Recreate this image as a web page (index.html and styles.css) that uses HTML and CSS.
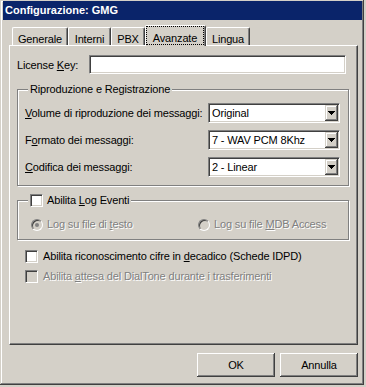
FILE: index.html
```html
<!DOCTYPE html>
<html lang="it">
<head>
<meta charset="utf-8">
<title>Configurazione: GMG</title>
<link rel="stylesheet" href="styles.css">
</head>
<body>
<div class="window">
  <div class="titlebar">Configurazione: GMG</div>
  <div class="content">
    <div class="tabs">
      <div class="tab w-generale"><span class="tab-label">Generale</span></div>
      <div class="tab w-interni"><span class="tab-label">Interni</span></div>
      <div class="tab w-pbx"><span class="tab-label">PBX</span></div>
      <div class="tab active w-avanzate"><span class="focus">Avanzate</span></div>
      <div class="tab w-lingua"><span class="tab-label">Lingua</span></div>
    </div>
    <div class="panel">
      <div class="key-row">
        <span class="key-label">License <u>K</u>ey:</span>
        <div class="edit"></div>
      </div>

      <fieldset class="group group-rip">
        <legend>Riproduzione e Registrazione</legend>
        <div class="field">
          <span><u>V</u>olume di riproduzione dei messaggi:</span>
          <div class="combo"><span class="combo-text">Original</span><span class="drop"><svg width="7" height="4" viewBox="0 0 7 4" shape-rendering="crispEdges"><path d="M0 0h7v1H0zM1 1h5v1H1zM2 2h3v1H2zM3 3h1v1H3z" fill="#000"/></svg></span></div>
        </div>
        <div class="field">
          <span>F<u>o</u>rmato dei messaggi:</span>
          <div class="combo"><span class="combo-text">7 - WAV PCM 8Khz</span><span class="drop"><svg width="7" height="4" viewBox="0 0 7 4" shape-rendering="crispEdges"><path d="M0 0h7v1H0zM1 1h5v1H1zM2 2h3v1H2zM3 3h1v1H3z" fill="#000"/></svg></span></div>
        </div>
        <div class="field">
          <span><u>C</u>odifica dei messaggi:</span>
          <div class="combo"><span class="combo-text">2 - Linear</span><span class="drop"><svg width="7" height="4" viewBox="0 0 7 4" shape-rendering="crispEdges"><path d="M0 0h7v1H0zM1 1h5v1H1zM2 2h3v1H2zM3 3h1v1H3z" fill="#000"/></svg></span></div>
        </div>
      </fieldset>

      <fieldset class="group group-log">
        <legend class="check-legend"><span class="cb"></span><span>Abilita <u>L</u>og Eventi</span></legend>
        <div class="radios">
          <div class="radio-item first disabled"><span class="radio checked"></span><span>Log su file di <u>t</u>esto</span></div>
          <div class="radio-item disabled"><span class="radio"></span><span>Log su file <u>M</u>DB Access</span></div>
        </div>
      </fieldset>

      <div class="check check-dec"><span class="cb"></span><span>Abilita riconoscimento cifre in <u>d</u>ecadico (Schede IDPD)</span></div>
      <div class="check check-dial disabled"><span class="cb"></span><span>Abilita <u>a</u>ttesa del DialTone durante i trasferimenti</span></div>
    </div>
    <div class="buttons">
      <div class="btn">OK</div>
      <div class="btn">Annulla</div>
    </div>
  </div>
</div>
</body>
</html>
```
FILE: styles.css
```css
* { box-sizing: border-box; }
html, body { margin: 0; padding: 0; }
body {
  width: 366px;
  height: 387px;
  overflow: hidden;
  background: #d4d0c8;
  font-family: "Liberation Sans", Arial, sans-serif;
  font-size: 11px;
  letter-spacing: -0.15px;
  color: #000;
}
u { text-decoration: underline; text-underline-offset: 1px; }

.window {
  width: 364px;
  height: 385px;
  padding: 1px 2px 0 3px;
  background: #d4d0c8;
  box-shadow: inset -1px -1px #404040, inset 1px 1px #d4d0c8, inset -2px -2px #808080, inset 2px 2px #fff;
  display: flex;
  flex-direction: column;
}
.titlebar {
  height: 19px;
  line-height: 19px;
  padding-left: 2px;
  background: #0a246a;
  color: #fff;
  font-weight: bold;
  letter-spacing: 0;
  white-space: nowrap;
}
.content {
  padding: 5px 4px 0 6px;
  display: flex;
  flex-direction: column;
}

/* tabs */
.tabs {
  display: flex;
  align-items: flex-end;
  height: 20px;
  padding-left: 3px;
}
.tab {
  height: 18px;
  border-left: 1px solid #fff;
  border-top: 1px solid #fff;
  border-right: 1px solid #404040;
  border-top-left-radius: 2px;
  border-top-right-radius: 2px;
  box-shadow: inset -1px 0 #808080;
  display: flex;
  align-items: flex-end;
  justify-content: center;
  white-space: nowrap;
}
.tab-label { line-height: 12px; }
.w-generale { width: 56px; }
.w-interni { width: 43px; }
.w-pbx { width: 34px; }
.w-avanzate { width: 61px; }
.w-lingua { width: 44px; }
.tab.active {
  height: 21px;
  margin-bottom: -1px;
  position: relative;
  z-index: 1;
  background: #d4d0c8;
  align-items: stretch;
}
.focus {
  flex: 1;
  margin: 0 1px 1px 0;
  border: 1px dotted #000;
  display: flex;
  align-items: flex-end;
  justify-content: center;
  line-height: 12px;
}

/* panel */
.panel {
  height: 300px;
  padding: 9px 0 0 7px;
  border-left: 1px solid #fff;
  border-top: 1px solid #fff;
  border-right: 1px solid #404040;
  border-bottom: 1px solid #404040;
  box-shadow: inset -1px -1px #808080;
  display: flex;
  flex-direction: column;
}
.key-row {
  display: flex;
  align-items: center;
  height: 19px;
}
.key-label { width: 72px; }
.edit {
  width: 257px;
  height: 19px;
  background: #fff;
  border: 1px solid;
  border-color: #808080 #fff #fff #808080;
  box-shadow: inset 1px 1px #404040, inset -1px -1px #d4d0c8;
}

.group {
  margin: 0;
  min-width: 0;
  width: 332px;
  border: 1px solid #808080;
  box-shadow: 1px 1px 0 #fff, inset 1px 1px 0 #fff;
}
.group legend {
  margin-left: 3px;
  padding: 0 2px;
  height: 13px;
  line-height: 13px;
  background: #d4d0c8;
}
.group-rip {
  margin-top: 9px;
  padding: 7px 8px 8px 7px;
  display: flex;
  flex-direction: column;
  gap: 7px;
}
.field {
  display: flex;
  align-items: center;
  justify-content: space-between;
  height: 20px;
  white-space: nowrap;
}
.combo {
  width: 132px;
  height: 20px;
  background: #fff;
  border: 1px solid;
  border-color: #808080 #fff #fff #808080;
  box-shadow: inset 1px 1px #404040, inset -1px -1px #d4d0c8;
  padding: 1px 1px 1px 3px;
  display: flex;
  align-items: center;
}
.combo-text { flex: 1; }
.drop {
  width: 13px;
  height: 16px;
  background: #d4d0c8;
  box-shadow: inset -1px -1px #404040, inset 1px 1px #d4d0c8, inset -2px -2px #808080, inset 2px 2px #fff;
  display: flex;
  align-items: center;
  justify-content: center;
}
.drop svg { display: block; }

.group-log {
  margin-top: 8px;
  padding: 11px 8px 8px 7px;
}
.check-legend {
  display: flex;
  align-items: center;
  gap: 4px;
}
.radios {
  display: flex;
  height: 13px;
  padding-left: 6px;
  white-space: nowrap;
}
.radio-item {
  display: flex;
  align-items: center;
  gap: 4px;
  line-height: 13px;
}
.radio-item.first { width: 167px; }

.cb {
  width: 13px;
  height: 13px;
  flex: none;
  background: #fff;
  border: 1px solid;
  border-color: #808080 #fff #fff #808080;
  box-shadow: inset 1px 1px #404040, inset -1px -1px #d4d0c8;
}
.radio {
  width: 12px;
  height: 12px;
  flex: none;
  border-radius: 50%;
  background: #d4d0c8;
  border: 1px solid;
  border-color: #808080 #fff #fff #808080;
  box-shadow: inset 1px 1px #404040, inset -1px -1px #d4d0c8;
  display: flex;
  align-items: center;
  justify-content: center;
}
.radio.checked::after {
  content: "";
  width: 4px;
  height: 4px;
  border-radius: 50%;
  background: #808080;
}

.check {
  display: flex;
  align-items: center;
  gap: 5px;
  height: 13px;
  line-height: 13px;
  padding-left: 8px;
  white-space: nowrap;
}
.check-dec { margin-top: 10px; }
.check-dial { margin-top: 7px; }

.disabled { color: #808080; text-shadow: 1px 1px 0 #fff; }
.disabled .cb { background: #d4d0c8; }

.buttons {
  display: flex;
  justify-content: flex-end;
  gap: 5px;
  margin-top: 8px;
}
.btn {
  width: 78px;
  height: 24px;
  display: flex;
  align-items: center;
  justify-content: center;
  background: #d4d0c8;
  box-shadow: inset -1px -1px #404040, inset 1px 1px #fff, inset -2px -2px #808080, inset 2px 2px #d4d0c8;
}
```
